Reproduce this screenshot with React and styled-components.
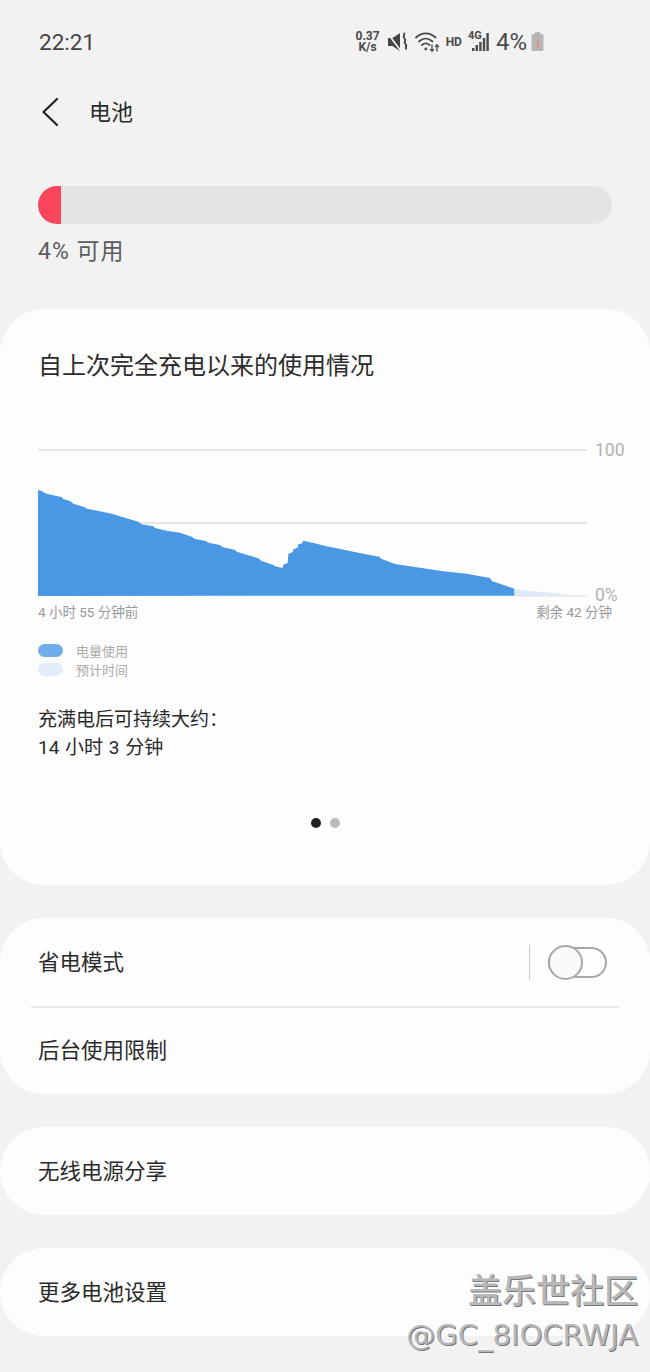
import React from 'react';
import styled, { createGlobalStyle } from 'styled-components';

const GlobalStyle = createGlobalStyle`
  html, body {
    margin: 0;
    padding: 0;
    background: #f2f2f2;
  }
  body {
    font-family: Roboto, "Noto Sans CJK SC", sans-serif;
  }
`;

// traced from the screenshot: [x, y] at 3x, ox is where the crop started
const leftPart = [[54,180],[65,183],[75,190],[95,195],[125,201],[130,207],[150,213],[160,221],[195,232],[200,236],[240,244],[275,251],[355,275],[365,283],[400,289],[405,294],[440,302],[480,308],[515,320],[525,327],[558,333],[565,338],[600,345],[610,352],[645,360],[650,365],[715,385],[725,393],[760,405],[765,409],[788,414],[790,404],[803,399],[805,372],[818,367],[820,358],[833,353],[835,343],[847,340],[850,332],[890,341],[930,352]];
const rightPart = [[0,343],[20,349],[50,355],[100,365],[130,371],[178,380],[185,387],[225,402],[300,413],[370,424],[440,431],[460,435],[510,444],[515,453],[583,476],[583,497]];

const toPage = (pts, ox) => pts.map(([x, y]) => `${(x / 3 + ox).toFixed(1)},${(y / 3 + 430).toFixed(1)}`);
const usedArea = [...toPage(leftPart, 20), ...toPage(rightPart, 320), '38,596'].join(' ');

const App = () => {
  return (
    <Page>
      <GlobalStyle />
      <StatusBar>
        <Clock>22:21</Clock>
        <StatusIcons>
          <NetSpeed>0.37<br />K/s</NetSpeed>
          <svg width="21" height="22" viewBox="0 0 21 22">
            <path d="M0 7h4.500L12 2v18l-7.500-5H0z" fill="#444" />
            <path d="M0.500 3.500L13 20" stroke="#f2f2f2" strokeWidth="1.600" />
            <path d="M15.500 2c2.600 2-1.600 3.500 1 5.500s-1.600 3.500 1 5.500-1.600 3.500 1 5.500" fill="none" stroke="#444" strokeWidth="2" />
          </svg>
          <svg width="25" height="22" viewBox="0 0 25 22" fill="none" stroke="#4a4a4a" strokeLinecap="round">
            <path d="M1 6.500c6-5.600 13.500-5.600 19.500 0" strokeWidth="1.800" />
            <path d="M4 10.500c4.200-3.900 9.300-3.900 13.500 0" strokeWidth="1.800" />
            <path d="M7 14c2.400-2.100 5-2.100 7.500 0" strokeWidth="1.800" />
            <circle cx="10.800" cy="18" r="1.400" fill="#4a4a4a" stroke="none" />
            <path d="M17 14v6M15.400 18.400l1.600 1.800 1.600-1.800" strokeWidth="1.300" />
            <path d="M22 20v-6M20.400 15.600l1.600-1.800 1.600 1.800" strokeWidth="1.300" />
          </svg>
          <HdMark>HD</HdMark>
          <SignalBox>
            <SignalType>4G</SignalType>
            <svg width="22" height="22" viewBox="0 0 22 22" fill="#4a4a4a">
              <rect x="4" y="17" width="2.400" height="3" />
              <rect x="7.600" y="14" width="2.400" height="6" />
              <rect x="11.200" y="11" width="2.400" height="9" />
              <rect x="14.800" y="7" width="2.400" height="13" />
              <rect x="18.400" y="2" width="2.400" height="18" />
            </svg>
          </SignalBox>
          <BatteryText>4%</BatteryText>
          <svg width="13" height="22" viewBox="0 0 13 22">
            <rect x="4" y="1" width="5" height="3" fill="#b5b5b5" />
            <rect x="0.500" y="3" width="12" height="17" rx="1.500" fill="#b5b5b5" />
            <rect x="5.500" y="9" width="2.500" height="8" fill="#d59a90" />
          </svg>
        </StatusIcons>
      </StatusBar>

      <Header>
        <svg width="18" height="30" viewBox="0 0 18 30" fill="none" stroke="#222" strokeWidth="2.200" strokeLinecap="round" strokeLinejoin="round">
          <path d="M16 2L2.500 15 16 28" />
        </svg>
        <HeaderTitle>电池</HeaderTitle>
      </Header>

      <BatterySection>
        <BatteryTrack>
          <BatteryFill />
        </BatteryTrack>
        <BatteryLabel>4% 可用</BatteryLabel>
      </BatterySection>

      <UsageCard>
        <CardTitle>自上次完全充电以来的使用情况</CardTitle>
        <Chart viewBox="0 440 650 160" width="650" height="160">
          <line x1="38" y1="450" x2="587" y2="450" stroke="#e6e6e6" strokeWidth="2" />
          <line x1="38" y1="523" x2="587" y2="523" stroke="#e6e6e6" strokeWidth="2" />
          <line x1="515" y1="596" x2="587" y2="596" stroke="#e6e6e6" strokeWidth="1.500" />
          <polygon points="514.500,589 530,591 550,592.500 570,595 587,596 514.500,596" fill="#dfe9f7" />
          <polygon points={usedArea} fill="#4a98e3" />
          <ChartLabel x="595" y="456">100</ChartLabel>
          <ChartLabel x="595" y="601">0%</ChartLabel>
        </Chart>
        <TimeRow>
          <span>4 小时 55 分钟前</span>
          <span>剩余 42 分钟</span>
        </TimeRow>
        <Legend>
          <LegendItem>
            <Swatch $color="#6faeeb" />
            <span>电量使用</span>
          </LegendItem>
          <LegendItem>
            <Swatch $color="#e3ecf9" />
            <span>预计时间</span>
          </LegendItem>
        </Legend>
        <Estimate>
          充满电后可持续大约：
          <br />
          14 小时 3 分钟
        </Estimate>
        <Pager>
          <Dot $active />
          <Dot />
        </Pager>
      </UsageCard>

      <ListCard>
        <Row $height={89}>
          <RowText>省电模式</RowText>
          <ToggleArea>
            <ToggleDivider />
            <Toggle>
              <Knob />
            </Toggle>
          </ToggleArea>
        </Row>
        <RowLine />
        <Row $height={87}><RowText>后台使用限制</RowText></Row>
      </ListCard>

      <ListCard>
        <Row $height={88}><RowText>无线电源分享</RowText></Row>
      </ListCard>

      <ListCard>
        <Row $height={88}><RowText>更多电池设置</RowText></Row>
      </ListCard>

      <Watermark>
        <WatermarkTitle>盖乐世社区</WatermarkTitle>
        <WatermarkUser>@GC_8IOCRWJA</WatermarkUser>
      </Watermark>
    </Page>
  );
};

const Page = styled.div`
  position: relative;
  width: 650px;
  height: 1372px;
  overflow: hidden;
  background: #f2f2f2;
  color: #252525;
`;

const StatusBar = styled.div`
  height: 84px;
  padding: 0 106px 0 39px;
  display: flex;
  align-items: center;
  justify-content: space-between;
`;

const Clock = styled.div`
  font-size: 22.500px;
  color: #444;
`;

const StatusIcons = styled.div`
  display: flex;
  align-items: center;
  gap: 6px;
  color: #4a4a4a;
`;

const NetSpeed = styled.div`
  font-size: 12px;
  line-height: 11.500px;
  font-weight: 700;
  text-align: center;
  margin-right: 2px;
`;

const HdMark = styled.div`
  font-size: 12px;
  font-weight: 700;
`;

const SignalBox = styled.div`
  position: relative;
  width: 22px;
  height: 22px;
`;

const SignalType = styled.div`
  position: absolute;
  left: 0;
  top: -2px;
  font-size: 11px;
  font-weight: 700;
`;

const BatteryText = styled.div`
  font-size: 24px;
  margin-right: -2px;
`;

const Header = styled.div`
  height: 56px;
  padding-left: 41px;
  display: flex;
  align-items: center;
  gap: 30px;
`;

const HeaderTitle = styled.div`
  font-size: 22px;
  padding-bottom: 4px;
  color: #2a2a2a;
`;

const BatterySection = styled.div`
  padding: 46px 38px 0;
  height: 123px;
`;

const BatteryTrack = styled.div`
  height: 38px;
  border-radius: 19px;
  background: #e4e4e4;
  overflow: hidden;
`;

const BatteryFill = styled.div`
  width: 23px;
  height: 100%;
  background: #f8475c;
`;

const BatteryLabel = styled.div`
  margin-top: 13px;
  font-size: 23px;
  letter-spacing: 1px;
  line-height: 30px;
  color: #5c5c5c;
`;

const UsageCard = styled.div`
  height: 576px;
  border-radius: 44px;
  background: #fdfdfd;
  margin-bottom: 33px;
  padding-top: 40px;
  box-sizing: border-box;
`;

const CardTitle = styled.div`
  padding-left: 38px;
  font-size: 24px;
  line-height: 34px;
  color: #2c2c2c;
`;

const Chart = styled.svg`
  display: block;
  margin-top: 57px;
  overflow: visible;
`;

const ChartLabel = styled.text`
  font-family: Roboto, sans-serif;
  font-size: 17.500px;
  fill: #b0b0b0;
`;

const TimeRow = styled.div`
  display: flex;
  justify-content: space-between;
  padding: 3px 38px 0;
  font-size: 13.500px;
  line-height: 18px;
  color: #999;
`;

const Legend = styled.div`
  margin-top: 23px;
  padding-left: 38px;
  display: flex;
  flex-direction: column;
  gap: 6px;
`;

const LegendItem = styled.div`
  display: flex;
  align-items: center;
  gap: 13px;
  height: 13px;
  font-size: 13px;
  color: #aaa;
`;

const Swatch = styled.div`
  width: 25px;
  height: 13px;
  border-radius: 7px;
  background: ${(p) => p.$color};
`;

const Estimate = styled.div`
  margin-top: 30px;
  padding-left: 38px;
  font-size: 19px;
  word-spacing: 1px;
  line-height: 28px;
  color: #2a2a2a;
`;

const Pager = styled.div`
  margin-top: 56px;
  display: flex;
  justify-content: center;
  gap: 9px;
`;

const Dot = styled.div`
  width: 10px;
  height: 10px;
  border-radius: 50%;
  background: ${(p) => (p.$active ? '#222' : '#bbb')};
`;

const ListCard = styled.div`
  border-radius: 44px;
  background: #fdfdfd;
  margin-bottom: 33px;
`;

const Row = styled.div`
  height: ${(p) => p.$height}px;
  padding: 0 43px 0 38px;
  display: flex;
  align-items: center;
  justify-content: space-between;
  font-size: 21.500px;
  color: #2a2a2a;
`;

const RowText = styled.div`
  padding-bottom: 4px;
`;

const RowLine = styled.div`
  height: 2px;
  margin: -1px 31px -1px;
  background: #e8e8e8;
`;

const ToggleArea = styled.div`
  display: flex;
  align-items: center;
  gap: 18px;
`;

const ToggleDivider = styled.div`
  width: 1px;
  height: 35px;
  background: #c9c9c9;
`;

const Toggle = styled.div`
  position: relative;
  width: 59px;
  height: 31px;
  border: 2px solid #a8a8a8;
  border-radius: 16px;
  box-sizing: border-box;
`;

const Knob = styled.div`
  position: absolute;
  left: -2px;
  top: -4px;
  width: 35px;
  height: 35px;
  border: 2px solid #a8a8a8;
  border-radius: 50%;
  background: #fafafa;
  box-sizing: border-box;
`;

const Watermark = styled.div`
  position: absolute;
  right: 12px;
  top: 1270px;
  text-align: right;
  color: #b8b8b8;
  text-shadow: 1px 1px 0 #777, -1px -1px 0 #ffffff;
`;

const WatermarkTitle = styled.div`
  font-size: 34px;
  line-height: 42px;
  font-weight: 500;
`;

const WatermarkUser = styled.div`
  font-family: "DejaVu Sans", sans-serif;
  font-size: 29px;
  line-height: 46px;
`;

export default App;
